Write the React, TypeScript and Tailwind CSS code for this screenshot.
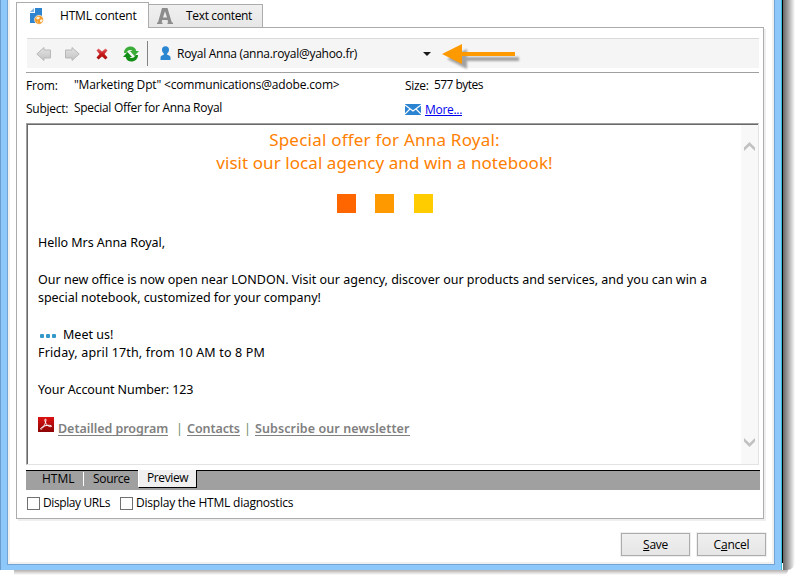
import React from "react";

const ui = "font-['Open_Sans','Noto_Sans',sans-serif] text-[12px] whitespace-nowrap";
const mail = "font-['Noto_Sans','Open_Sans',sans-serif] whitespace-nowrap";

function HtmlIcon() {
  return (
    <svg width="15" height="17" viewBox="0 0 15 17">
      <path d="M5 0h7v8H8v7H0V5h5z" fill="#2e84cf" />
      <path d="M0 4 4 0v4z" fill="#7fb4e2" />
      <circle cx="9" cy="11.800" r="4.500" fill="#f39a27" stroke="#fff" strokeWidth=".6" />
      <path d="m6 10 2-1.500 2 1-1 1.500-2 .5zM10 12l2-1 .8 1.500-1.500 2-1.300-.7zM7 13l1.300 1-.5 1z" fill="#fff1da" />
    </svg>
  );
}

function BackArrow({ flip = false }: { flip?: boolean }) {
  return (
    <svg width="16" height="14" viewBox="0 0 16 14" className={flip ? "-scale-x-100" : ""}>
      <defs>
        <linearGradient id="arrow" x1="0" y1="0" x2="0" y2="1">
          <stop offset="0" stopColor="#e3e3e3" />
          <stop offset="1" stopColor="#c2c2c2" />
        </linearGradient>
      </defs>
      <path d="M.8 7 8 .5v2.500h6.500v8H8v2.500z" fill="url(#arrow)" stroke="#b8b8b8" strokeWidth="1" />
    </svg>
  );
}

function RedCross() {
  return (
    <svg width="12" height="12" viewBox="0 0 12 12">
      <defs>
        <linearGradient id="cross" x1="0" y1="0" x2="0" y2="1">
          <stop offset="0" stopColor="#e4686c" />
          <stop offset=".5" stopColor="#c81a1a" />
          <stop offset="1" stopColor="#a30c0c" />
        </linearGradient>
      </defs>
      <path d="M2.500.5 6 3.500 9.500.5 11.500 2.500 8.500 6l3 3.500-2 2L6 8.500l-3.500 3-2-2L3.500 6l-3-3.500z" fill="url(#cross)" />
    </svg>
  );
}

function RefreshIcon() {
  return (
    <svg width="16" height="16" viewBox="0 0 16 16">
      <path d="M1 7C1 3 4 .5 7.500.5c3 0 5.200 1.500 5.800 4.500H16l-4.500 5L7 5h2.500C8 3.300 4.500 3.500 3.500 7z" fill="#3aad38" />
      <path d="M15 9c0 4-3 6.500-6.500 6.500-3 0-5.200-1.500-5.800-4.500H0l4.500-5L9 11H6.500c1.500 1.700 5 1.500 6-2z" fill="#138f17" />
    </svg>
  );
}

function PersonIcon() {
  return (
    <svg width="11" height="15" viewBox="0 0 11 15">
      <path d="M5.500.3c2.300 0 3.500 1.500 3.500 3.500C9 5.500 8.200 6.700 7.200 7.400v1.400c1.900.5 3.300 1.200 3.300 3v2.200H.5v-2.200c0-1.800 1.400-2.500 3.300-3V7.400C2.800 6.700 2 5.500 2 3.800 2 1.800 3.200.3 5.500.3z" fill="#2b86d2" />
    </svg>
  );
}

function Pointer() {
  return (
    <svg width="86" height="28" viewBox="0 0 86 28" className="overflow-visible">
      <defs>
        <filter id="soft" x="-20%" y="-50%" width="140%" height="200%">
          <feGaussianBlur stdDeviation="1.300" />
        </filter>
      </defs>
      <path d="M1 11 21 1v8h52v4H21v8z" fill="#777" opacity=".65" transform="translate(4 5)" filter="url(#soft)" />
      <path d="M0 11 20 1v8h53v4H20v8z" fill="#ff9900" />
    </svg>
  );
}

function MailIcon() {
  return (
    <svg width="16" height="11" viewBox="0 0 16 11">
      <path d="M0 0h16v11H0z" fill="#2b84d2" />
      <path d="m0 1 8 6 8-6M0 10l5-5M16 10l-5-5" fill="none" stroke="#fff" strokeWidth="1.100" />
    </svg>
  );
}

function PdfIcon() {
  return (
    <svg width="16" height="15" viewBox="0 0 16 15">
      <defs>
        <linearGradient id="pdf" x1="0" y1="0" x2="0" y2="1">
          <stop offset="0" stopColor="#dd1111" />
          <stop offset="1" stopColor="#8c0505" />
        </linearGradient>
      </defs>
      <path d="M0 0h16v15H0z" fill="url(#pdf)" />
      <path d="M7.500 2c-1.300 0-.5 3 1 5.300 1.500 2 4.500 3 5 2 .4-1-2.500-1.300-5.500-.7C5 9.200 2.300 11 2.600 12c.4 1 2.600-1.300 4-4.300C7.700 5.300 8.500 2 7.500 2z" fill="none" stroke="#fff" strokeWidth="1" />
    </svg>
  );
}

function ScrollArrow({ down = false }: { down?: boolean }) {
  return (
    <svg width="11" height="9" viewBox="0 0 11 9" className={down ? "-scale-y-100" : ""}>
      <path d="M0 5.500 5.500 0 11 5.500V9L5.500 3.800 0 9z" fill="#c1c1c1" />
    </svg>
  );
}

function Button({ children, className }: { children: React.ReactNode; className: string }) {
  return (
    <button className={`${ui} flex h-[23px] w-[69px] items-center justify-center border border-[#acacac] bg-linear-to-b from-[#f0f0f0] to-[#e5e5e5] shadow-[0_0_0_1px_#efefef] ${className}`}>
      {children}
    </button>
  );
}

function MailBody() {
  return (
    <div className={`${mail} w-[713px] pt-[3px] text-[12.500px] leading-[18.500px] text-black`}>
      <div className="text-center text-[17px] leading-[23px] text-[#ff8000]">
        <div><span className="tracking-[0.220px]">Special offer for Anna Royal:</span></div>
        <div><span className="tracking-[0.070px]">visit our local agency and win a notebook!</span></div>
      </div>
      <div className="ml-[309px] mt-5 flex h-[19px]">
        <div className="w-[19px] bg-[#ff6600]" />
        <div className="ml-[19px] w-[19px] bg-[#ff9900]" />
        <div className="ml-5 w-[19px] bg-[#ffcc00]" />
      </div>
      <div className="ml-[10px] mt-[20.500px]">
        <p><span className="tracking-[-0.050px]">Hello Mrs Anna Royal,</span></p>
        <p className="mt-[18.500px]"><span>Our new office is now open near LONDON. Visit our agency, discover our products and services, and you can win a</span></p>
        <p><span className="tracking-[-0.040px]">special notebook, customized for your company!</span></p>
        <div className="mt-[18px] flex items-center">
          <div className="ml-[2px] flex w-[23px] gap-[2.500px] pt-[2px]">
            <i className="size-[3.500px] rounded-[1px] bg-[#3399cc]" />
            <i className="size-[3.500px] rounded-[1px] bg-[#3399cc]" />
            <i className="size-[3.500px] rounded-[1px] bg-[#3399cc]" />
          </div>
          <span>Meet us!</span>
        </div>
        <p><span className="tracking-[0.150px]">Friday, april 17th, from 10 AM to 8 PM</span></p>
        <p className="mt-[18.500px]"><span className="tracking-[-0.100px]">Your Account Number: 123</span></p>
        <div className="mt-[17px] flex h-5 items-start font-semibold leading-[20px] text-[#808080]">
          <PdfIcon />
          <div className="mt-[2px] flex">
            <span className="ml-1 h-[17px] w-[110px] border-b border-[#808080] tracking-[-0.040px]">Detailled program</span>
            <span className="ml-[8px] w-[11px] font-normal text-[#6b8e6b]">|</span>
            <span className="h-[17px] w-[53px] border-b border-[#808080] tracking-[-0.080px]">Contacts</span>
            <span className="ml-[4px] w-[11px] font-normal text-[#6b8e6b]">|</span>
            <span className="h-[17px] w-[155px] border-b border-[#808080] tracking-[0.100px]">Subscribe our newsletter</span>
          </div>
        </div>
      </div>
    </div>
  );
}

export default function App() {
  return (
    <div className={`${ui} h-[583px] w-[803px] overflow-hidden bg-white leading-[16px] text-black`}>
      <div className="flex h-[570px]">
        <div className="w-[782px] border-l border-r border-l-[#6c9ccc] border-r-[#35c0dc] bg-[#8ec8fb] pb-[5px] pl-[6px] pr-[6px]">
          <div className="h-[565px] border border-t-0 border-[#71a3d4]">
            <div className="h-[564px] border-2 border-t-0 border-[#f0f0f0] bg-white pl-[6px]">
              <div className="relative flex h-[28px] pt-[2px]">
                <div className="flex h-[26px] w-[133px] items-center border border-b-0 border-[#acacac] bg-white pl-[13px]">
                  <span className="pt-px"><HtmlIcon /></span>
                  <span className="ml-[15px] tracking-[-0.170px]">HTML content</span>
                </div>
                <div className="mt-[2px] flex h-[23px] w-[114px] items-center border border-b-0 border-l-0 border-[#acacac] bg-linear-to-b from-[#f0f0f0] to-[#e7e7e7] pl-[8px]">
                  <svg width="16" height="16" viewBox="0 0 16 16"><path d="M5 0h5.500l4.300 14.500H16V16h-5.500v-1.500h.8L10.500 12H5.300l-.8 2.500h1V16H0v-1.500h1zM8 3.200 6 9.500h4z" fill="#8c8c8c" fillRule="evenodd" /></svg>
                  <span className="ml-[13px] tracking-[-0.330px]">Text content</span>
                </div>
              </div>
              <div className="-mt-px flex h-[492px] w-[748px] flex-col border border-[#acacac] border-t-transparent bg-white bg-clip-padding pl-[9px] pt-0 shadow-[2px_2px_0_#efefef]">
                <div className="-mt-px ml-[122px] h-px w-[616px] bg-[#acacac]" />
                <div className="ml-px mt-[10px] flex h-[30px] w-[732px] shrink-0 items-center border-t border-[#dadada] bg-[#f5f5f5] pl-[9px]">
                  <BackArrow />
                  <span className="ml-[12px] flex"><BackArrow flip /></span>
                  <span className="ml-[16px]"><RedCross /></span>
                  <span className="ml-[15px]"><RefreshIcon /></span>
                  <div className="ml-[8px] h-[25px] w-px bg-[#838383]" />
                  <span className="ml-[12px]"><PersonIcon /></span>
                  <span className="ml-[6px] w-[246px] tracking-[-0.280px]"><span>Royal Anna (anna.royal@yahoo.fr)</span></span>
                  <svg width="8" height="4" viewBox="0 0 8 4"><path d="M0 0h8L4 4z" fill="#1a1a1a" /></svg>
                  <span className="ml-[11px] mt-[7px]"><Pointer /></span>
                </div>
                <div className="mt-[4px] h-px w-[733px] shrink-0 bg-[#a0a0a0]" />
                <div className="flex h-[24px] shrink-0 items-center">
                  <span className="w-[48px] pt-px tracking-[-0.200px]">From:</span>
                  <span className="w-[331px] tracking-[-0.170px]">"Marketing Dpt" &lt;communications@adobe.com&gt;</span>
                  <span className="w-[29px] pt-px tracking-[-0.300px]">Size:</span>
                  <span className="tracking-[-0.550px]">577 bytes</span>
                </div>
                <div className="flex h-[23px] shrink-0 items-center">
                  <span className="w-[48px] tracking-[-0.250px]">Subject:</span>
                  <span className="w-[331px] -mt-px tracking-[-0.290px]">Special Offer for Anna Royal</span>
                  <span className="pt-px"><MailIcon /></span>
                  <a className="ml-1 pt-[2px] tracking-[-0.300px] text-[#0000ee] underline">More...</a>
                </div>
                <div className="mt-[3px] h-[342px] w-[733px] shrink-0 border border-b-[#e3e3e3] border-l-[#a0a0a0] border-r-[#e3e3e3] border-t-[#a0a0a0]">
                  <div className="flex h-[340px] border-l border-t border-[#696969]">
                    <MailBody />
                    <div className="flex w-[17px] flex-col items-center justify-between bg-[#f8f8f8] pb-[17px] pt-[17px]">
                      <ScrollArrow />
                      <ScrollArrow down />
                    </div>
                  </div>
                </div>
                <div className="mt-[5px] flex h-[20px] w-[734px] shrink-0 border-t border-black bg-[#a0a0a0]">
                  <span className="flex h-[16px] w-[57px] items-center pl-[16px]">HTML</span>
                  <div className="mt-px h-[14px] w-px bg-white" />
                  <span className="flex h-[16px] w-[54px] items-center pl-[9px] tracking-[-0.300px]">Source</span>
                  <div className="-mt-px flex h-[18px] w-[59px] items-center border-b border-l border-r border-b-black border-l-white border-r-black bg-[#f0f0f0] pl-[8px] pb-px tracking-[-0.400px]">Preview</div>
                </div>
                <div className="mt-[6px] flex h-[14px] items-center pl-px">
                  <div className="size-[13px] border border-[#707070]" />
                  <span className="ml-[3px] w-[77px] tracking-[-0.400px]">Display URLs</span>
                  <div className="size-[13px] border border-[#707070]" />
                  <span className="ml-[3px] tracking-[-0.220px]">Display the HTML diagnostics</span>
                </div>
              </div>
              <div className="mt-[14px] flex pl-[605px]">
                <Button className="tracking-[-0.300px]"><span><u>S</u>ave</span></Button>
                <Button className="ml-[7px] tracking-[-0.200px]"><span>C<u>a</u>ncel</span></Button>
              </div>
            </div>
          </div>
        </div>
        <div className="h-[563px] w-px bg-black" />
        <div className="h-[570px] w-[12px] rounded-br-[8px] bg-linear-to-r from-[#666] to-white" />
      </div>
      <div className="ml-[14px] h-[5px] w-[774px] rounded-br-[5px] bg-linear-to-b from-[#b5b0b0] to-white" />
    </div>
  );
}
